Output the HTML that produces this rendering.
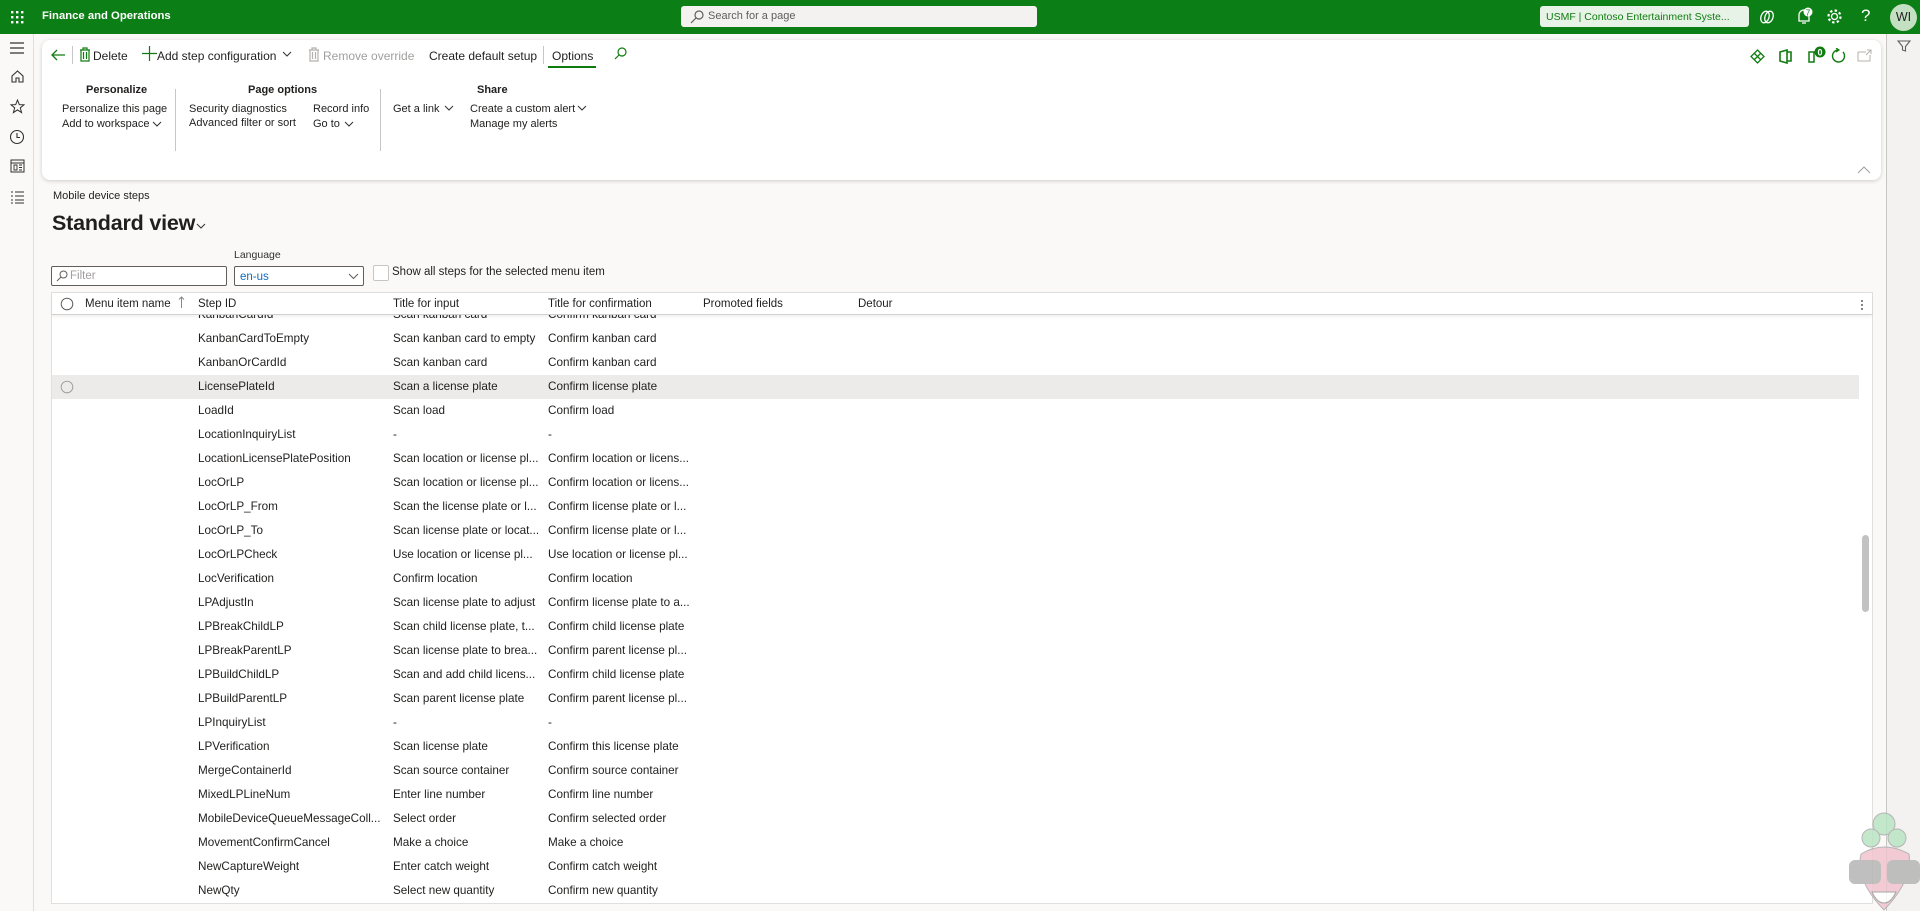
<!DOCTYPE html>
<html><head><meta charset="utf-8"><style>
*{box-sizing:border-box;margin:0;padding:0}
body{width:1920px;height:911px;overflow:hidden;background:#faf9f8;font-family:"Liberation Sans",sans-serif;font-size:12px;color:#201f1e;position:relative}
.a{position:absolute;white-space:nowrap}
#top{left:0;top:0;width:1920px;height:34px;background:#0b7e15}
#nav{left:0;top:34px;width:34px;height:877px;background:#faf9f8;border-right:1px solid #e1dfdd}
#rp{left:1886px;top:34px;width:34px;height:877px;background:#f3f2f1;border-left:1px solid #c8c6c4}
#card{left:42px;top:40px;width:1839px;height:140px;background:#fff;border-radius:8px;box-shadow:0 1px 4px rgba(0,0,0,.18)}
.sep{width:1px;background:#c8c6c4}
.gh{font-weight:bold;font-size:11px}
.m{font-size:11px}
#grid{left:51px;top:292px;width:1822px;height:612px;background:#fff;border:1px solid #e1dfdd}
.hdr{left:0;top:0;width:1820px;height:22px;border-bottom:1px solid #d2d0ce;box-shadow:0 2px 3px rgba(0,0,0,.06);background:#fff;z-index:2}
.hdr div{font-size:11.5px}
.row{position:absolute;left:0;width:1807px;height:24px;font-size:11.7px}
.row span{position:absolute;top:5px;white-space:nowrap}
</style></head><body>
<div id="top" class="a">
 <svg class="a" style="left:11px;top:11px" width="13" height="13"><g fill="#fff"><rect x="0" y="0" width="2.4" height="2.4"/><rect x="5" y="0" width="2.4" height="2.4"/><rect x="10" y="0" width="2.4" height="2.4"/><rect x="0" y="5" width="2.4" height="2.4"/><rect x="5" y="5" width="2.4" height="2.4"/><rect x="10" y="5" width="2.4" height="2.4"/><rect x="0" y="10" width="2.4" height="2.4"/><rect x="5" y="10" width="2.4" height="2.4"/><rect x="10" y="10" width="2.4" height="2.4"/></g></svg>
 <div class="a" style="left:42px;top:10px;color:#fff;font-weight:bold;font-size:11.3px">Finance and Operations</div>
 <div class="a" style="left:681px;top:6px;width:356px;height:21px;background:#f3f2f1;border-radius:3px"></div>
 <svg class="a" style="left:690px;top:10px" width="14" height="14"><circle cx="9" cy="5" r="4" stroke="#605e5c" fill="none" stroke-width="1.2"/><line x1="6" y1="8" x2="1" y2="13" stroke="#605e5c" stroke-width="1.2"/></svg>
 <div class="a" style="left:708px;top:10px;color:#605e5c;font-size:11px">Search for a page</div>
 <div class="a" style="left:1540px;top:6px;width:209px;height:21px;background:#e8f3e8;border-radius:3px;color:#107c10;font-size:10.5px;padding:5px 6px;overflow:hidden">USMF | Contoso Entertainment Syste...</div>
 <svg class="a" style="left:1759px;top:9px" width="16" height="16"><ellipse cx="6" cy="8" rx="4" ry="6" stroke="#fff" fill="none" stroke-width="1.3" transform="rotate(20 6 8)"/><ellipse cx="10" cy="8" rx="4" ry="6" stroke="#fff" fill="none" stroke-width="1.3" transform="rotate(20 10 8)"/></svg>
 <svg class="a" style="left:1795px;top:7px" width="18" height="18"><path d="M4 14 L4 8 A5 5 0 0 1 14 8 L14 14 Z M7 16 H11" stroke="#fff" fill="none" stroke-width="1.3"/><circle cx="13" cy="5" r="4.5" fill="#fff"/><text x="13" y="8.5" font-size="8" text-anchor="middle" fill="#0b7e15" font-family="Liberation Sans">7</text></svg>
 <svg class="a" style="left:1826px;top:8px" width="17" height="17"><circle cx="8.5" cy="8.5" r="3" stroke="#fff" fill="none" stroke-width="1.3"/><circle cx="8.5" cy="8.5" r="6" stroke="#fff" fill="none" stroke-width="2.2" stroke-dasharray="2.4 2.3"/></svg>
 <div class="a" style="left:1861px;top:6px;color:#fff;font-size:17px">?</div>
 <div class="a" style="left:1890px;top:4px;width:27px;height:27px;border-radius:50%;background:#c3e0c3;color:#201f1e;font-size:12.5px;text-align:center;line-height:27px">WI</div>
</div>
<div id="nav" class="a">
 <svg class="a" style="left:9px;top:7px" width="16" height="14"><path d="M1 2H15M1 7H15M1 12H15" stroke="#323130" stroke-width="1.3"/></svg>
 <svg class="a" style="left:10px;top:35px" width="15" height="15"><path d="M2 7 L7.5 2 L13 7 V13 H9 V9 H6 V13 H2 Z" stroke="#323130" fill="none" stroke-width="1.1"/></svg>
 <svg class="a" style="left:10px;top:65px" width="15" height="15"><path d="M7.5 1 L9.3 5.6 L14 5.8 L10.3 8.8 L11.6 13.6 L7.5 10.9 L3.4 13.6 L4.7 8.8 L1 5.8 L5.7 5.6 Z" stroke="#323130" fill="none" stroke-width="1"/></svg>
 <svg class="a" style="left:9px;top:95px" width="16" height="16"><circle cx="8" cy="8" r="6.5" stroke="#323130" fill="none" stroke-width="1.1"/><path d="M8 4V8.5H11" stroke="#323130" fill="none" stroke-width="1.1"/></svg>
 <svg class="a" style="left:10px;top:125px" width="15" height="14"><rect x="1" y="1" width="13" height="12" stroke="#323130" fill="none"/><path d="M1 4H14M4 6H7V11H4ZM9 6H12M9 8.5H12M9 11H12" stroke="#323130" fill="none" stroke-width=".9"/></svg>
 <svg class="a" style="left:10px;top:156px" width="15" height="14"><path d="M1 2H3M1 6H3M1 10H3M1 13H3M5 2H14M5 6H14M5 10H14M5 13H14" stroke="#323130" stroke-width="1.1"/></svg>
</div>
<div id="rp" class="a"><svg class="a" style="left:10px;top:5px" width="14" height="14"><path d="M1 2H13L8.5 7.5V12L5.5 11V7.5Z" stroke="#605e5c" fill="none" stroke-width="1.1"/></svg></div>

<div id="card" class="a">
 <svg class="a" style="left:8px;top:8px" width="16" height="14"><path d="M15 7H2M7 2L2 7L7 12" stroke="#107c10" fill="none" stroke-width="1.3"/></svg>
 <div class="a sep" style="left:30px;top:6px;height:18px"></div>
 <svg class="a" style="left:37px;top:7px" width="12" height="15"><path d="M1 3H11M4 3V1H8V3M2 3V14H10V3M4.5 5V12M7.5 5V12" stroke="#107c10" fill="none" stroke-width="1.2"/></svg>
 <div class="a" style="left:51px;top:9px">Delete</div>
 <svg class="a" style="left:100px;top:6px" width="15" height="15"><path d="M7.5 0V15M0 7.5H15" stroke="#107c10" stroke-width="1.2"/></svg>
 <div class="a" style="left:115px;top:9px">Add step configuration</div>
 <svg class="a" style="left:240px;top:11px" width="10" height="7"><path d="M1 1L5 5L9 1" stroke="#323130" fill="none"/></svg>
 <svg class="a" style="left:266px;top:7px" width="12" height="15"><path d="M1 3H11M4 3V1H8V3M2 3V14H10V3M4.5 5V12M7.5 5V12" stroke="#b3b0ad" fill="none" stroke-width="1.2"/></svg>
 <div class="a" style="left:281px;top:9px;color:#a19f9d">Remove override</div>
 <div class="a" style="left:387px;top:9px">Create default setup</div>
 <div class="a sep" style="left:501px;top:6px;height:18px"></div>
 <div class="a" style="left:510px;top:9px">Options</div>
 <div class="a" style="left:506px;top:26px;width:48px;height:2px;background:#107c10"></div>
 <svg class="a" style="left:572px;top:7px" width="13" height="13"><circle cx="8" cy="5" r="4" stroke="#107c10" fill="none" stroke-width="1.2"/><line x1="5" y1="8" x2="1" y2="12" stroke="#107c10" stroke-width="1.2"/></svg>

 <div class="a gh" style="left:44px;top:44px">Personalize</div>
 <div class="a m" style="left:20px;top:63px">Personalize this page</div>
 <div class="a m" style="left:20px;top:78px">Add to workspace</div>
 <svg class="a" style="left:110px;top:81px" width="10" height="7"><path d="M1 1L5 5L9 1" stroke="#323130" fill="none"/></svg>
 <div class="a sep" style="left:133px;top:49px;height:62px"></div>
 <div class="a gh" style="left:206px;top:44px">Page options</div>
 <div class="a m" style="left:147px;top:63px">Security diagnostics</div>
 <div class="a m" style="left:147px;top:77px">Advanced filter or sort</div>
 <div class="a m" style="left:271px;top:63px">Record info</div>
 <div class="a m" style="left:271px;top:78px">Go to</div>
 <svg class="a" style="left:302px;top:81px" width="10" height="7"><path d="M1 1L5 5L9 1" stroke="#323130" fill="none"/></svg>
 <div class="a sep" style="left:338px;top:49px;height:62px"></div>
 <div class="a gh" style="left:435px;top:44px">Share</div>
 <div class="a m" style="left:351px;top:63px">Get a link</div>
 <svg class="a" style="left:402px;top:65px" width="10" height="7"><path d="M1 1L5 5L9 1" stroke="#323130" fill="none"/></svg>
 <div class="a m" style="left:428px;top:63px">Create a custom alert</div>
 <svg class="a" style="left:535px;top:65px" width="10" height="7"><path d="M1 1L5 5L9 1" stroke="#323130" fill="none"/></svg>
 <div class="a m" style="left:428px;top:78px">Manage my alerts</div>

 <svg class="a" style="left:1708px;top:9px" width="15" height="15"><path d="M7.5 1L14 7.5L7.5 14L1 7.5Z M4.5 4.5L10.5 10.5M10.5 4.5L4.5 10.5" stroke="#107c10" fill="none" stroke-width="1.3"/></svg>
 <svg class="a" style="left:1737px;top:9px" width="13" height="15"><path d="M1 3L8 1V14L1 12Z M8 3H12V12H8" stroke="#107c10" fill="none" stroke-width="1.6"/></svg>
 <svg class="a" style="left:1765px;top:6px" width="20" height="18"><path d="M2 6H7V16H2Z" stroke="#107c10" fill="none" stroke-width="1.5"/><circle cx="13" cy="6" r="5.5" fill="#107c10"/><text x="13" y="9.5" font-size="9" fill="#fff" text-anchor="middle" font-family="Liberation Sans" font-weight="bold">0</text></svg>
 <svg class="a" style="left:1788px;top:8px" width="16" height="16"><path d="M13 4A6 6 0 1 1 8 2" stroke="#107c10" fill="none" stroke-width="1.4"/><path d="M6 0L9 2L6 4" stroke="#107c10" fill="none" stroke-width="1.2"/></svg>
 <svg class="a" style="left:1815px;top:9px" width="15" height="13"><path d="M1 3H9M1 3V12H13V6M10 1H14V5M14 1L9 6" stroke="#b3b0ad" fill="none" stroke-width="1"/></svg>
 <svg class="a" style="left:1815px;top:126px" width="14" height="8"><path d="M1 7L7 1L13 7" stroke="#a19f9d" fill="none"/></svg>
</div>

<div class="a" style="left:53px;top:190px;font-size:11px">Mobile device steps</div>
<div class="a" style="left:52px;top:211px;font-size:21.5px;font-weight:bold;letter-spacing:-.2px">Standard view</div>
<svg class="a" style="left:196px;top:223px" width="10" height="7"><path d="M1 1L5 5L9 1" stroke="#323130" fill="none"/></svg>
<div class="a" style="left:234px;top:249px;font-size:10.5px;color:#323130">Language</div>
<div class="a" style="left:51px;top:266px;width:176px;height:20px;border:1px solid #605e5c;border-radius:2px;background:#fff"></div>
<svg class="a" style="left:56px;top:270px" width="12" height="12"><circle cx="7.5" cy="4.5" r="3.5" stroke="#605e5c" fill="none"/><line x1="5" y1="7" x2="1" y2="11" stroke="#605e5c"/></svg>
<div class="a" style="left:70px;top:270px;color:#a19f9d;font-size:11.5px">Filter</div>
<div class="a" style="left:234px;top:266px;width:130px;height:20px;border:1px solid #605e5c;border-radius:2px;background:#fff;color:#0f6cbd;padding:4px 5px;font-size:11.5px">en-us</div>
<svg class="a" style="left:348px;top:273px" width="11" height="7"><path d="M1 1L5.5 5.5L10 1" stroke="#605e5c" fill="none"/></svg>
<div class="a" style="left:373px;top:265px;width:16px;height:16px;border:1px solid #c8c6c4;border-radius:2px;background:#fff"></div>
<div class="a" style="left:392px;top:266px;font-size:11.5px">Show all steps for the selected menu item</div>

<div id="grid" class="a">
 <div class="a hdr">
  <svg class="a" style="left:8px;top:4px" width="14" height="14"><circle cx="7" cy="7" r="5.8" stroke="#605e5c" fill="none" stroke-width="1"/></svg>
  <div class="a" style="left:33px;top:5px">Menu item name</div>
  <svg class="a" style="left:126px;top:3px" width="7" height="13"><path d="M3.5 12V1M1 3.5L3.5 1L6 3.5" stroke="#8a8886" fill="none"/></svg>
  <div class="a" style="left:146px;top:5px">Step ID</div>
  <div class="a" style="left:341px;top:5px">Title for input</div>
  <div class="a" style="left:496px;top:5px">Title for confirmation</div>
  <div class="a" style="left:651px;top:5px">Promoted fields</div>
  <div class="a" style="left:806px;top:5px">Detour</div>
  <svg class="a" style="left:1808px;top:6px" width="4" height="12"><circle cx="2" cy="2" r="1" fill="#605e5c"/><circle cx="2" cy="6" r="1" fill="#605e5c"/><circle cx="2" cy="10" r="1" fill="#605e5c"/></svg>
 </div>
 <div class="a" style="left:0;top:22px;width:1820px;height:588px;overflow:hidden">
  <div class="a" style="left:1810px;top:220px;width:7px;height:77px;border-radius:4px;background:#c2c2c2"></div>
  <div style="position:absolute;left:0;top:-12px;width:1807px">
   <div class="row" style="top:0"><span style="left:146px">KanbanCardId</span><span style="left:341px">Scan kanban card</span><span style="left:496px">Confirm kanban card</span></div>
   <div class="row" style="top:24px"><span style="left:146px">KanbanCardToEmpty</span><span style="left:341px">Scan kanban card to empty</span><span style="left:496px">Confirm kanban card</span></div>
   <div class="row" style="top:48px"><span style="left:146px">KanbanOrCardId</span><span style="left:341px">Scan kanban card</span><span style="left:496px">Confirm kanban card</span></div>
   <div class="row" style="top:72px;background:#edebe9"><svg style="position:absolute;left:8px;top:5px" width="14" height="14"><circle cx="7" cy="7" r="5.8" stroke="#a19f9d" fill="none" stroke-width="1"/></svg><span style="left:146px">LicensePlateId</span><span style="left:341px">Scan a license plate</span><span style="left:496px">Confirm license plate</span></div>
   <div class="row" style="top:96px"><span style="left:146px">LoadId</span><span style="left:341px">Scan load</span><span style="left:496px">Confirm load</span></div>
   <div class="row" style="top:120px"><span style="left:146px">LocationInquiryList</span><span style="left:341px">-</span><span style="left:496px">-</span></div>
   <div class="row" style="top:144px"><span style="left:146px">LocationLicensePlatePosition</span><span style="left:341px">Scan location or license pl...</span><span style="left:496px">Confirm location or licens...</span></div>
   <div class="row" style="top:168px"><span style="left:146px">LocOrLP</span><span style="left:341px">Scan location or license pl...</span><span style="left:496px">Confirm location or licens...</span></div>
   <div class="row" style="top:192px"><span style="left:146px">LocOrLP_From</span><span style="left:341px">Scan the license plate or l...</span><span style="left:496px">Confirm license plate or l...</span></div>
   <div class="row" style="top:216px"><span style="left:146px">LocOrLP_To</span><span style="left:341px">Scan license plate or locat...</span><span style="left:496px">Confirm license plate or l...</span></div>
   <div class="row" style="top:240px"><span style="left:146px">LocOrLPCheck</span><span style="left:341px">Use location or license pl...</span><span style="left:496px">Use location or license pl...</span></div>
   <div class="row" style="top:264px"><span style="left:146px">LocVerification</span><span style="left:341px">Confirm location</span><span style="left:496px">Confirm location</span></div>
   <div class="row" style="top:288px"><span style="left:146px">LPAdjustIn</span><span style="left:341px">Scan license plate to adjust</span><span style="left:496px">Confirm license plate to a...</span></div>
   <div class="row" style="top:312px"><span style="left:146px">LPBreakChildLP</span><span style="left:341px">Scan child license plate, t...</span><span style="left:496px">Confirm child license plate</span></div>
   <div class="row" style="top:336px"><span style="left:146px">LPBreakParentLP</span><span style="left:341px">Scan license plate to brea...</span><span style="left:496px">Confirm parent license pl...</span></div>
   <div class="row" style="top:360px"><span style="left:146px">LPBuildChildLP</span><span style="left:341px">Scan and add child licens...</span><span style="left:496px">Confirm child license plate</span></div>
   <div class="row" style="top:384px"><span style="left:146px">LPBuildParentLP</span><span style="left:341px">Scan parent license plate</span><span style="left:496px">Confirm parent license pl...</span></div>
   <div class="row" style="top:408px"><span style="left:146px">LPInquiryList</span><span style="left:341px">-</span><span style="left:496px">-</span></div>
   <div class="row" style="top:432px"><span style="left:146px">LPVerification</span><span style="left:341px">Scan license plate</span><span style="left:496px">Confirm this license plate</span></div>
   <div class="row" style="top:456px"><span style="left:146px">MergeContainerId</span><span style="left:341px">Scan source container</span><span style="left:496px">Confirm source container</span></div>
   <div class="row" style="top:480px"><span style="left:146px">MixedLPLineNum</span><span style="left:341px">Enter line number</span><span style="left:496px">Confirm line number</span></div>
   <div class="row" style="top:504px"><span style="left:146px">MobileDeviceQueueMessageColl...</span><span style="left:341px">Select order</span><span style="left:496px">Confirm selected order</span></div>
   <div class="row" style="top:528px"><span style="left:146px">MovementConfirmCancel</span><span style="left:341px">Make a choice</span><span style="left:496px">Make a choice</span></div>
   <div class="row" style="top:552px"><span style="left:146px">NewCaptureWeight</span><span style="left:341px">Enter catch weight</span><span style="left:496px">Confirm catch weight</span></div>
   <div class="row" style="top:576px"><span style="left:146px">NewQty</span><span style="left:341px">Select new quantity</span><span style="left:496px">Confirm new quantity</span></div>
  </div>
 </div>
</div>
<svg class="a" style="left:1849px;top:802px" width="71" height="109"><g opacity=".85"><circle cx="35" cy="22" r="11" fill="#b9e4c3" stroke="#aaa"/><circle cx="22" cy="36" r="9" fill="#b9e4c3" stroke="#aaa"/><circle cx="48" cy="36" r="9" fill="#b9e4c3" stroke="#aaa"/><path d="M12 52 Q35 38 60 52 Q64 78 35 108 Q6 78 12 52Z" fill="#f1c4cf" stroke="#aaa"/><rect x="0" y="58" width="32" height="24" rx="6" fill="#b5b5b5"/><rect x="38" y="58" width="33" height="24" rx="6" fill="#b5b5b5"/><path d="M23 90 H47 Q42 101 35 101 Q28 101 23 90Z" fill="#fff" stroke="#999"/></g></svg>
</body></html>
